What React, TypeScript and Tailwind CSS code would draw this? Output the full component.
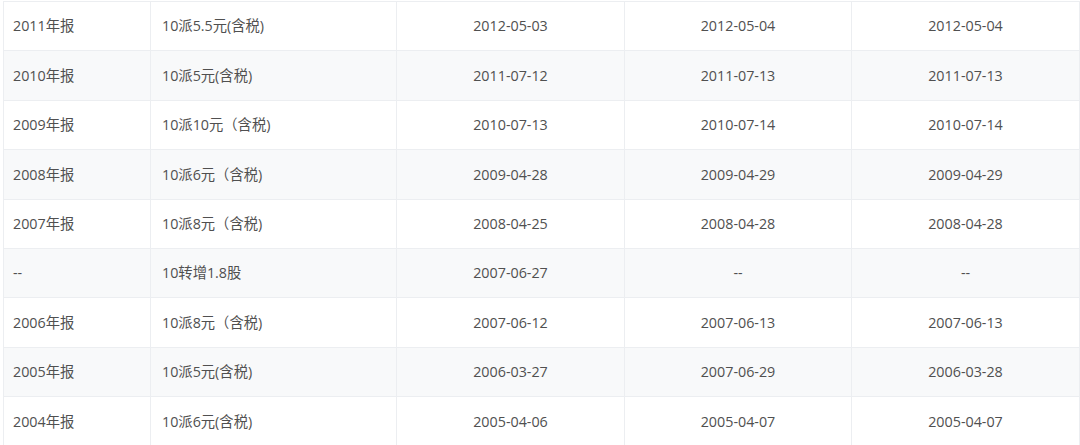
const rows: [string, string, string, string, string][] = [
  ['2011年报', '10派5.5元(含税)', '2012-05-03', '2012-05-04', '2012-05-04'],
  ['2010年报', '10派5元(含税)', '2011-07-12', '2011-07-13', '2011-07-13'],
  ['2009年报', '10派10元（含税)', '2010-07-13', '2010-07-14', '2010-07-14'],
  ['2008年报', '10派6元（含税)', '2009-04-28', '2009-04-29', '2009-04-29'],
  ['2007年报', '10派8元（含税)', '2008-04-25', '2008-04-28', '2008-04-28'],
  ['--', '10转增1.8股', '2007-06-27', '--', '--'],
  ['2006年报', '10派8元（含税)', '2007-06-12', '2007-06-13', '2007-06-13'],
  ['2005年报', '10派5元(含税)', '2006-03-27', '2007-06-29', '2006-03-28'],
  ['2004年报', '10派6元(含税)', '2005-04-06', '2005-04-07', '2005-04-07'],
]

export default function App() {
  return (
    <div className="w-[1080px] h-[445px] overflow-hidden bg-white pl-[3px] pt-[1px]">
      <table
        className="w-[1076px] table-fixed border-collapse text-[14.3px] text-[#505050]"
        style={{ fontFamily: '"Open Sans", "Noto Sans CJK SC", sans-serif' }}
      >
        <colgroup>
          <col className="w-[147px]" />
          <col className="w-[246px]" />
          <col className="w-[228px]" />
          <col className="w-[227px]" />
          <col className="w-[228px]" />
        </colgroup>
        <tbody>
          {rows.map((r, i) => (
            <tr key={i} className={`h-[49.4px] ${i % 2 === 1 ? 'bg-[#f8f9fa]' : 'bg-white'}`}>
              <td className="border border-[#eceef1] px-[9px] text-left">{r[0]}</td>
              <td className="border border-[#eceef1] px-[11px] text-left">{r[1]}</td>
              <td className="border border-[#eceef1] text-center">{r[2]}</td>
              <td className="border border-[#eceef1] text-center">{r[3]}</td>
              <td className="border border-[#eceef1] text-center">{r[4]}</td>
            </tr>
          ))}
        </tbody>
      </table>
    </div>
  )
}
